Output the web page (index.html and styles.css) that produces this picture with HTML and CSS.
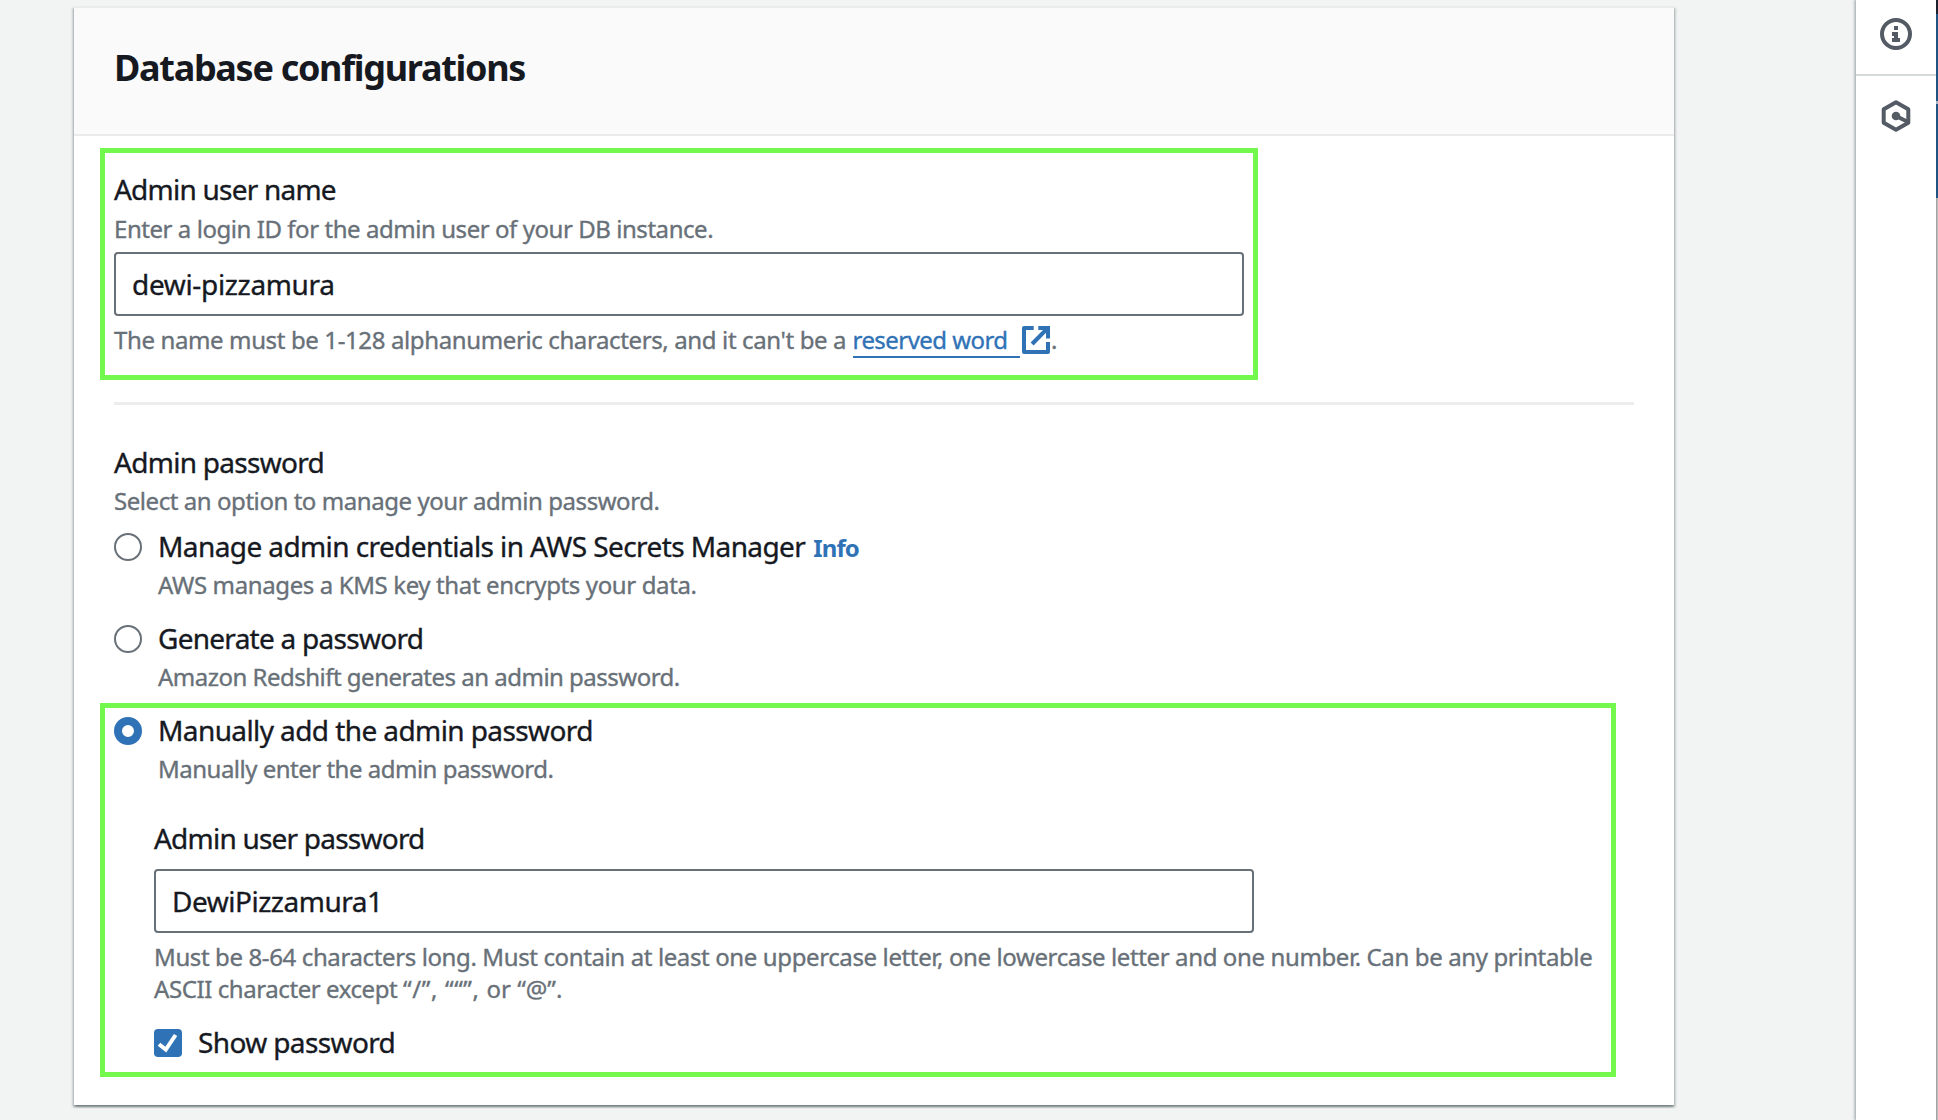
FILE: index.html
```html
<!DOCTYPE html>
<html lang="en">
<head>
<meta charset="utf-8">
<title>Database configurations</title>
<link rel="stylesheet" href="styles.css">
</head>
<body>
<div class="app">
  <main class="content">
    <section class="panel">
      <header class="panel-header"><h2 class="title">Database configurations</h2></header>
      <div class="panel-body">
        <div class="label label-username">Admin user name</div>
        <div class="help help-username">Enter a login ID for the admin user of your DB instance.</div>
        <div class="input input-username">dewi-pizzamura</div>
        <div class="constraint">
          <span class="constraint-text">The name must be 1-128 alphanumeric characters, and it can't be a </span>
          <a class="link">reserved word</a>
          <svg class="external" viewBox="0 0 28 28" width="28" height="28">
            <path d="M11.7 2H2V26H26V16" fill="none" stroke="currentColor" stroke-width="4" stroke-linejoin="round"/>
            <path d="M16.3 0H28V12.4H24V6.7L11.6 19.4L8.6 16.5L21 4H16.3Z" fill="currentColor"/>
          </svg>
          <span class="dot">.</span>
        </div>
        <hr class="divider">
        <div class="label label-password">Admin password</div>
        <div class="help help-password">Select an option to manage your admin password.</div>
        <div class="options">
          <div class="option">
            <span class="radio"></span>
            <div class="option-text">
              <div class="option-head"><span class="label opt-manage">Manage admin credentials in AWS Secrets Manager</span><a class="info">Info</a></div>
              <div class="help desc-manage">AWS manages a KMS key that encrypts your data.</div>
            </div>
          </div>
          <div class="option">
            <span class="radio"></span>
            <div class="option-text">
              <div class="label opt-generate">Generate a password</div>
              <div class="help desc-generate">Amazon Redshift generates an admin password.</div>
            </div>
          </div>
          <div class="option">
            <span class="radio radio-checked"></span>
            <div class="option-text">
              <div class="label opt-manual">Manually add the admin password</div>
              <div class="help desc-manual">Manually enter the admin password.</div>
            </div>
          </div>
        </div>
        <div class="manual">
          <div class="label label-manual">Admin user password</div>
          <div class="input input-password">DewiPizzamura1</div>
          <div class="rules">
            <div class="rule-first">Must be 8-64 characters long. Must contain at least one uppercase letter, one lowercase letter and one number. Can be any printable</div>
            <div><span class="rule-second">ASCII character except </span><span class="quotes">“/”, ““”, </span>or “@”.</div>
          </div>
          <div class="check-row">
            <svg class="checkbox" viewBox="0 0 28 28" width="28" height="28">
              <rect width="28" height="28" rx="4" fill="#3072b6"/>
              <path d="M5 15.2L11.8 20.6L21.6 6" fill="none" stroke="#fff" stroke-width="4"/>
            </svg>
            <span class="label show">Show password</span>
          </div>
        </div>
      </div>
      <div class="highlight highlight-username"></div>
      <div class="highlight highlight-manual"></div>
    </section>
  </main>
  <aside class="tools">
    <div class="tool tool-info">
      <svg viewBox="0 0 32 32" width="32" height="32">
        <circle cx="16" cy="16" r="14" fill="none" stroke="currentColor" stroke-width="4"/>
        <path d="M14 8h4v4h-4zM12 14h6v6h2v4h-8v-4h2v-2h-2z" fill="currentColor"/>
      </svg>
    </div>
    <div class="tool tool-hex">
      <svg viewBox="0 0 32 32" width="32" height="32">
        <path d="M16 2.2L28.3 9.2V22.8L16 29.8L3.7 22.8V9.2Z" fill="none" stroke="currentColor" stroke-width="4" stroke-linejoin="round"/>
        <path d="M16 16L28 22" stroke="currentColor" stroke-width="4"/>
        <circle cx="16" cy="16" r="4.3" fill="currentColor"/>
      </svg>
    </div>
  </aside>
  <div class="edge">
    <div class="edge-dark"></div><div class="edge-blue"></div><div class="edge-gap"></div><div class="edge-blue-long"></div><div class="edge-gray"></div>
  </div>
</div>
</body>
</html>
```

FILE: styles.css
```css
* { box-sizing: border-box; }
body { margin: 0; background: #f2f4f3; color: #16191f; font-family: "Noto Sans", "Open Sans", sans-serif; }
.app { display: flex; height: 1120px; overflow: hidden; }
.content { flex: 1; padding: 6px 182px 0 74px; }
.panel { position: relative; height: 1099px; background: #fff; box-shadow: 0 2px 2px rgba(0, 28, 36, .35), 2px 2px 2px rgba(0, 28, 36, .15), -2px 2px 2px rgba(0, 28, 36, .15); }
.panel-header { height: 130px; padding: 35px 40px 0; background: #fafafa; border-top: 2px solid #eaebeb; border-bottom: 2px solid #eaebeb; }
.title { margin: 0; font-size: 36px; line-height: 49px; font-weight: 700; letter-spacing: -1.3px; }
.panel-body { padding: 34px 40px 0; -webkit-text-stroke: .35px currentColor; }

.label { font-size: 28px; line-height: 38px; white-space: nowrap; }
.help { margin-top: 3px; font-size: 24px; line-height: 33px; color: #687078; white-space: nowrap; }
.label-username { letter-spacing: -.77px; }
.help-username { margin-top: 4px; letter-spacing: -.445px; }
.label-password { letter-spacing: -.72px; }
.help-password { letter-spacing: -.44px; }

.input { height: 64px; padding: 11px 16px; border: 2px solid #687078; border-radius: 4px; background: #fff; font-size: 28px; line-height: 38px; }
.input-username { width: 1130px; margin-top: 7px; letter-spacing: -.34px; }
.input-password { width: 1100px; margin-top: 12px; letter-spacing: -.49px; }

.constraint { display: flex; height: 33px; margin-top: 7px; font-size: 24px; line-height: 33px; color: #687078; white-space: pre; }
.constraint-text { width: 738.5px; letter-spacing: -.375px; }
.link { width: 167.5px; height: 35px; color: #3072b6; border-bottom: 2px solid #3072b6; letter-spacing: -.55px; }
.external { margin: 3px 1px 0 2px; color: #3072b6; }
.divider { height: 3px; margin: 46px 0 38px; border: 0; background: #ededed; }

.options { display: flex; flex-direction: column; gap: 18px; margin-top: 10px; }
.option { display: flex; gap: 16px; }
.radio { width: 28px; height: 28px; margin-top: 6px; border: 2px solid #687078; border-radius: 50%; background: #fff; }
.radio-checked { border: 8px solid #3072b6; }
.option-head { display: flex; gap: 8px; height: 38px; }
.info { padding-top: 4px; font-size: 24px; line-height: 33px; font-weight: 700; letter-spacing: -.9px; color: #3072b6; -webkit-text-stroke: 0; }
.opt-manage { letter-spacing: -.59px; }
.desc-manage { letter-spacing: -.38px; }
.opt-generate { letter-spacing: -.73px; }
.desc-generate { letter-spacing: -.51px; }
.opt-manual { letter-spacing: -.59px; }
.desc-manual { letter-spacing: -.5px; }

.manual { margin: 34px 0 0 40px; }
.label-manual { letter-spacing: -.78px; }
.rules { margin-top: 8px; font-size: 24px; line-height: 32px; color: #687078; white-space: nowrap; }
.rule-first { letter-spacing: -.38px; }
.rule-second { letter-spacing: -.42px; }
.quotes { letter-spacing: .6px; }
.check-row { display: flex; gap: 16px; margin-top: 18px; }
.checkbox { margin-top: 6px; }
.show { letter-spacing: -.62px; }

/* callout frames laid over the form */
.highlight { position: absolute; border: 5px solid #73f84d; }
.highlight-username { left: 26px; top: 142px; width: 1158px; height: 232px; }
.highlight-manual { left: 26px; top: 697px; width: 1516px; height: 374px; }

.tools { width: 80px; background: #fff; color: #545b64; box-shadow: 0 0 3px 1px rgba(0, 28, 36, .4); }
.tool { display: flex; justify-content: center; }
.tool svg { display: block; }
.tool-info { height: 76px; padding-top: 18px; border-bottom: 2px solid #d5dbdb; }
.tool-hex { padding-top: 24px; }

.edge { display: flex; flex-direction: column; width: 2px; z-index: 1; }
.edge-dark { height: 14px; background: #1b212d; }
.edge-blue { height: 87px; background: #1f5382; }
.edge-gap { height: 3px; background: #a6b8c8; }
.edge-blue-long { height: 94px; background: #1f5382; }
.edge-gray { flex: 1; background: linear-gradient(90deg, #a3a3a3 50%, #bdbdbd 50%); }
```
